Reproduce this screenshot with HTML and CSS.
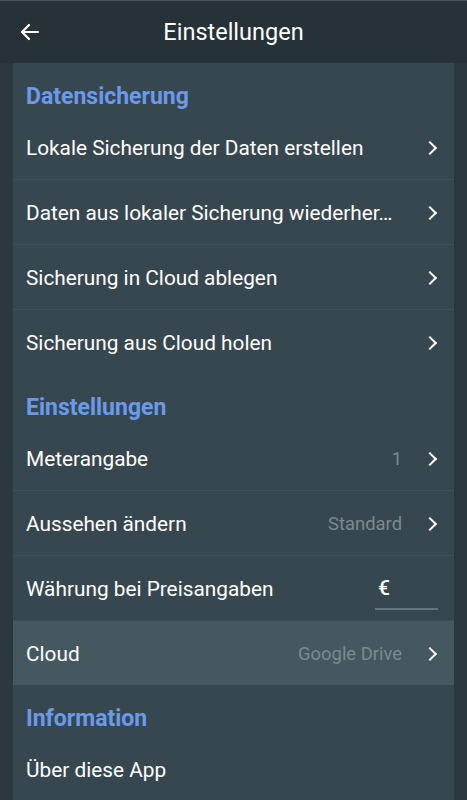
FILE: index.html
```html
<!DOCTYPE html>
<html lang="de">
<head>
<meta charset="utf-8">
<link rel="stylesheet" href="styles.css">
</head>
<body>
<header class="topbar">
  <svg class="back" width="24" height="24" viewBox="0 0 24 24"><path d="M20 12H5M11 5l-7 7 7 7" fill="none" stroke="#fff" stroke-width="2.2" stroke-linecap="round" stroke-linejoin="round"/></svg>
  <h1 class="title">Einstellungen</h1>
</header>
<main class="card">
  <div class="section">Datensicherung</div>
  <div class="row"><span class="label">Lokale Sicherung der Daten erstellen</span><span class="chev"></span></div>
  <div class="row"><span class="label">Daten aus lokaler Sicherung wiederher…</span><span class="chev"></span></div>
  <div class="row"><span class="label">Sicherung in Cloud ablegen</span><span class="chev"></span></div>
  <div class="row last"><span class="label">Sicherung aus Cloud holen</span><span class="chev"></span></div>
  <div class="section">Einstellungen</div>
  <div class="row"><span class="label">Meterangabe</span><span class="value">1</span><span class="chev"></span></div>
  <div class="row"><span class="label">Aussehen ändern</span><span class="value">Standard</span><span class="chev"></span></div>
  <div class="row"><span class="label">Währung bei Preisangaben</span><span class="input">€</span></div>
  <div class="row active last"><span class="label">Cloud</span><span class="value">Google Drive</span><span class="chev"></span></div>
  <div class="section">Information</div>
  <div class="row last"><span class="label">Über diese App</span></div>
</main>
</body>
</html>
```
FILE: styles.css
```css
html, body {
  margin: 0;
  padding: 0;
  background: #2c383f;
  font-family: Roboto, "Noto Sans", sans-serif;
  height: 800px;
  overflow: hidden;
}
.topbar {
  height: 62px;
  background: #263238;
  border-top: 1px solid #4a5358;
  display: flex;
  align-items: center;
  position: relative;
}
.back {
  margin-left: 18px;
}
.title {
  position: absolute;
  left: 0;
  right: 0;
  text-align: center;
  margin: 0;
  font-weight: 400;
  font-size: 23.5px;
  color: #ffffff;
  pointer-events: none;
}
.card {
  margin: 0 13px;
  background: #37474f;
  display: flex;
  flex-direction: column;
}
.section {
  height: 52px;
  box-sizing: border-box;
  padding: 20px 0 0 13px;
  font-size: 23px;
  font-weight: 700;
  color: #6a9be9;
  line-height: 28px;
}
.row {
  height: 65px;
  box-sizing: border-box;
  padding: 1px 13px 0 13px;
  display: flex;
  align-items: center;
  border-bottom: 1px solid #3f5058;
}
.row.last {
  border-bottom: none;
  height: 64px;
}
.row.active {
  background: #455860;
}
.label {
  flex: 1;
  color: #ffffff;
  font-size: 20.8px;
  white-space: nowrap;
}
.value {
  color: #7c8a90;
  font-size: 18.4px;
  margin-right: 23px;
}
.chev {
  width: 8px;
  height: 8px;
  border-top: 2.5px solid #fff;
  border-right: 2.5px solid #fff;
  transform: rotate(45deg);
  margin-right: 6px;
}
.input {
  width: 63px;
  box-sizing: border-box;
  padding: 0 0 8px 3px;
  margin-top: 8px;
  margin-right: 3px;
  border-bottom: 2px solid #67767c;
  color: #fff;
  font-size: 21px;
  font-weight: 500;
}
```
